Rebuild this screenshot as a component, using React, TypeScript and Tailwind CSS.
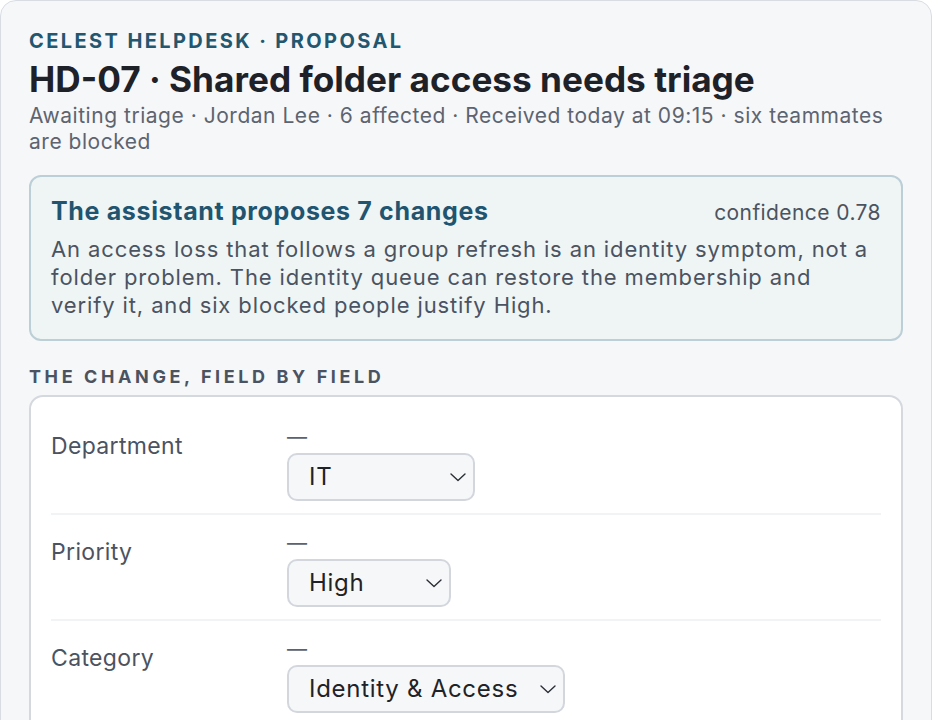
import React from 'react';

type FieldChange = {
  label: string;
  value: string;
  width: string;
};

const FIELDS: FieldChange[] = [
  { label: 'Department', value: 'IT', width: 'w-[188px]' },
  { label: 'Priority', value: 'High', width: 'w-[164px]' },
  { label: 'Category', value: 'Identity & Access', width: 'w-[278px]' },
  { label: 'Queue', value: 'Identity', width: 'w-[200px]' },
  { label: 'Status', value: 'In progress', width: 'w-[210px]' },
];

const Chevron: React.FC = () => (
  <svg
    className="pointer-events-none absolute right-2 top-1/2 -translate-y-1/2"
    width="18"
    height="10"
    viewBox="0 0 18 10"
    fill="none"
  >
    <path d="M2 2l7 6.5L16 2" stroke="#2a2e35" strokeWidth="1.4" strokeLinecap="round" strokeLinejoin="round" />
  </svg>
);

const FieldRow: React.FC<{ field: FieldChange; last: boolean }> = ({ field, last }) => (
  <div
    className={`grid grid-cols-[236px_1fr] pt-[22px] pb-3 ${last ? '' : 'border-b-2 border-[#f2f3f5]'}`}
  >
    <div className="text-[23px] leading-[30px] tracking-[0.015em] text-[#4b5361]">{field.label}</div>
    <div className="flex flex-col items-start">
      <div className="text-[20px] leading-[12px] text-[#5b6270]">—</div>
      <div className={`relative mt-[10px] ${field.width}`}>
        <select
          defaultValue={field.value}
          className="h-12 w-full appearance-none rounded-[10px] border-2 border-[#d3d7dd] bg-[#f6f7f9] pl-5 pr-8 text-[24px] tracking-[0.03em] text-[#1f2328] outline-none"
        >
          <option>{field.value}</option>
        </select>
        <Chevron />
      </div>
    </div>
  </div>
);

export default function App() {
  return (
    <div className="min-h-screen bg-white font-['Inter',sans-serif]">
      <div className="rounded-t-2xl border border-[#d9dde3] bg-[#f6f7f9] px-7 pt-7 pb-10">
        <div className="text-[20px] font-bold uppercase leading-6 tracking-[0.12em] text-[#23566f]">
          Celest Helpdesk · Proposal
        </div>
        <h1 className="mt-1 text-[35.2px] font-bold leading-[44px] text-[#1e2127]">
          HD-07 · Shared folder access needs triage
        </h1>
        <p className="mt-0.5 text-[21px] leading-[26px] tracking-[0.025em] text-[#5d6470]">
          Awaiting triage · Jordan Lee · 6 affected · Received today at 09:15 · six teammates are blocked
        </p>

        <div className="mt-5 rounded-xl border-2 border-[#bccfd6] bg-[#eff5f4] px-5 pt-[18px] pb-5">
          <div className="flex items-baseline justify-between">
            <h2 className="text-[25px] font-bold leading-8 tracking-[0.026em] text-[#1f5570]">
              The assistant proposes 7 changes
            </h2>
            <span className="text-[21px] tracking-[0.02em] text-[#4b5361]">confidence 0.78</span>
          </div>
          <p className="mt-1.5 text-[22px] leading-7 tracking-[0.04em] text-[#4b5361]">
            An access loss that follows a group refresh is an identity symptom, not a folder problem. The
            identity queue can restore the membership and verify it, and six blocked people justify High.
          </p>
        </div>

        <div className="mt-6 text-[18px] font-bold uppercase leading-6 tracking-[0.2em] text-[#4b5361]">
          The change, field by field
        </div>
        <div className="mt-[6px] rounded-[14px] border-2 border-[#d5d9df] bg-white px-5 pt-[12px] pb-5">
          {FIELDS.map((field, i) => (
            <FieldRow key={field.label} field={field} last={i === FIELDS.length - 1} />
          ))}
        </div>
      </div>
    </div>
  );
}
